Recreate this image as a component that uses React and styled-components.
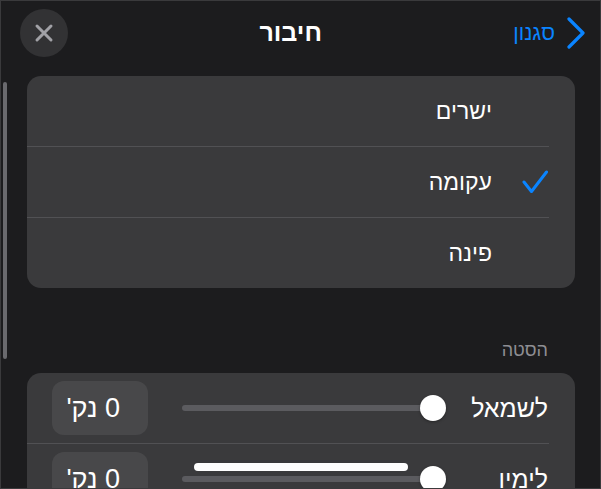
import React from 'react'
import styled, { createGlobalStyle } from 'styled-components'

const GlobalStyle = createGlobalStyle`
  html, body {
    margin: 0;
    padding: 0;
    background: #1c1c1e;
  }
  * {
    box-sizing: border-box;
  }
`

const Frame = styled.div`
  position: relative;
  direction: rtl;
  width: 601px;
  height: 489px;
  overflow: hidden;
  background: #1c1c1e;
  border: 1px solid #3a3a3c;
  font-family: 'Liberation Sans', 'DejaVu Sans', sans-serif;
  color: #fff;
`

const Header = styled.div`
  display: flex;
  align-items: center;
  justify-content: space-between;
  height: 63px;
  padding: 0 14px 0 19px;
`

const BackButton = styled.button`
  display: flex;
  align-items: center;
  gap: 11px;
  appearance: none;
  border: none;
  background: transparent;
  padding: 0;
  margin: 0;
  font: inherit;
  font-size: 21px;
  color: #0a84ff;
  cursor: pointer;
`

const Title = styled.h1`
  margin: 0;
  font-size: 25px;
  font-weight: 700;
  color: #fff;
`

const CloseButton = styled.button`
  display: flex;
  align-items: center;
  justify-content: center;
  width: 48px;
  height: 48px;
  border-radius: 50%;
  border: none;
  padding: 0;
  background: #323234;
  cursor: pointer;
`

const Scroller = styled.div`
  position: absolute;
  left: 2px;
  top: 81px;
  width: 4px;
  height: 277px;
  border-radius: 2px;
  background: #6a6a6e;
`

const Body = styled.div`
  padding: 12px 25px 0 26px;
`

const Card = styled.div`
  position: relative;
  background: #3a3a3c;
  border-radius: 14px;
  overflow: hidden;
`

const OptionRow = styled.div`
  display: flex;
  align-items: center;
  gap: 30px;
  height: 70px;
  padding-right: 27px;
  font-size: 23px;
`

const CheckSlot = styled.div`
  display: flex;
  align-items: center;
  justify-content: center;
  width: 26px;
  height: 26px;
`

const Divider = styled.div`
  height: 1px;
  margin-right: 26px;
  background: #515154;
`

const SectionLabel = styled.div`
  padding: 52px 27px 12px 0;
  font-size: 18px;
  color: #8e8e93;
`

const SliderRow = styled.div`
  position: relative;
  display: flex;
  align-items: center;
  height: 70px;
  padding: 0 27px 0 25px;
`

const RowLabel = styled.div`
  flex: 0 0 102px;
  font-size: 25px;
`

const Slider = styled.div`
  position: relative;
  flex: 1;
  height: 26px;
  margin-left: 34px;
`

const Track = styled.div`
  position: absolute;
  left: 0;
  right: 8px;
  top: 10px;
  height: 6px;
  border-radius: 3px;
  background: #5b5b5f;
`

const Thumb = styled.div`
  position: absolute;
  right: 0;
  top: 0;
  width: 26px;
  height: 26px;
  border-radius: 50%;
  background: #fff;
  box-shadow: 0 1px 3px rgba(0, 0, 0, 0.35);
`

const Highlight = styled.div`
  position: absolute;
  left: 12px;
  top: -3px;
  width: 214px;
  height: 8px;
  border-radius: 4px;
  background: #fff;
`

const ValueBox = styled.div`
  display: flex;
  align-items: center;
  flex: 0 0 96px;
  height: 54px;
  padding-right: 28px;
  border-radius: 12px;
  background: #48484a;
  font-size: 27px;
  white-space: nowrap;
`

function XIcon() {
  return (
    <svg width="20" height="20" viewBox="0 0 20 20">
      <path
        d="M3 3 L17 17 M17 3 L3 17"
        stroke="#a1a1a6"
        strokeWidth="3"
        strokeLinecap="round"
      />
    </svg>
  )
}

function Chevron() {
  return (
    <svg width="20" height="32" viewBox="0 0 20 32">
      <path
        d="M3 2 L17 16 L3 30"
        fill="none"
        stroke="#0a84ff"
        strokeWidth="3.2"
        strokeLinecap="round"
        strokeLinejoin="round"
      />
    </svg>
  )
}

function Check() {
  return (
    <svg width="26" height="24" viewBox="0 0 26 24">
      <path
        d="M2 12 L9.5 21.5 L24.5 2"
        fill="none"
        stroke="#0a84ff"
        strokeWidth="3"
        strokeLinecap="round"
        strokeLinejoin="round"
      />
    </svg>
  )
}

const options = [
  { label: 'ישרים', checked: false },
  { label: 'עקומה', checked: true },
  { label: 'פינה', checked: false },
]

const offsets = [
  { label: 'לשמאל', value: "0 נק'" },
  { label: 'לימין', value: "0 נק'", highlight: true },
]

export default function App() {
  return (
    <>
      <GlobalStyle />
      <Frame>
        <Header>
          <BackButton type="button">
            <Chevron />
            <span>סגנון</span>
          </BackButton>
          <Title>חיבור</Title>
          <CloseButton type="button" aria-label="סגירה">
            <XIcon />
          </CloseButton>
        </Header>
        <Scroller />
        <Body>
          <Card>
            {options.map((o, i) => (
              <React.Fragment key={o.label}>
                {i > 0 && <Divider />}
                <OptionRow>
                  <CheckSlot>{o.checked && <Check />}</CheckSlot>
                  <span>{o.label}</span>
                </OptionRow>
              </React.Fragment>
            ))}
          </Card>
          <SectionLabel>הסטה</SectionLabel>
          <Card>
            {offsets.map((r, i) => (
              <React.Fragment key={r.label}>
                {i > 0 && <Divider />}
                <SliderRow>
                  <RowLabel>{r.label}</RowLabel>
                  <Slider>
                    <Track />
                    <Thumb />
                    {r.highlight && <Highlight />}
                  </Slider>
                  <ValueBox>{r.value}</ValueBox>
                </SliderRow>
              </React.Fragment>
            ))}
          </Card>
        </Body>
      </Frame>
    </>
  )
}
